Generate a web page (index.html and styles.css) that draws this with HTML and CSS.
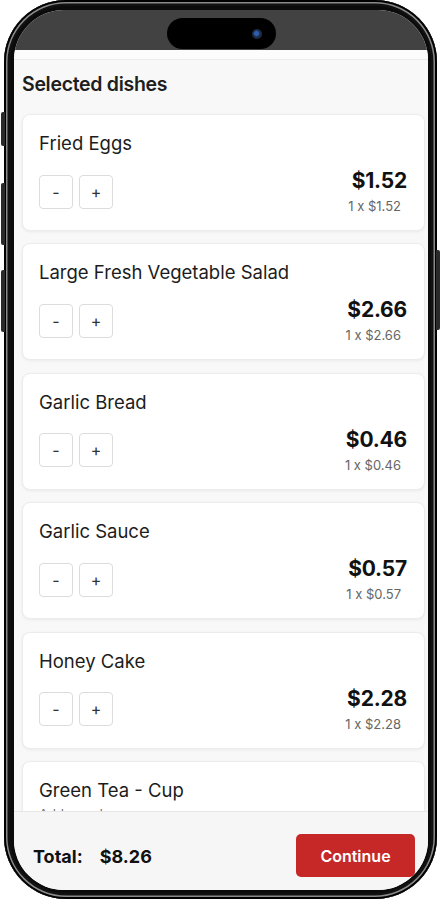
FILE: index.html
```html
<!DOCTYPE html>
<html lang="en">
<head>
<meta charset="utf-8">
<title>Selected dishes</title>
<link rel="stylesheet" href="styles.css">
</head>
<body>
<div class="phone">
  <span class="side-btn side-btn-1"></span>
  <span class="side-btn side-btn-2"></span>
  <span class="side-btn side-btn-3"></span>
  <span class="side-btn side-btn-r"></span>
  <div class="screen">
    <div class="status">
      <div class="island"><span class="cam"></span></div>
    </div>
    <div class="topbar"></div>
    <main class="content">
      <h1 class="title">Selected dishes</h1>
      <div class="list">
        <div class="card">
          <div class="name">Fried Eggs</div>
          <div class="row">
            <div class="qty"><button class="qbtn">-</button><button class="qbtn">+</button></div>
            <div class="price-box"><div class="price">$1.52</div><div class="unit">1 x $1.52</div></div>
          </div>
        </div>
        <div class="card">
          <div class="name">Large Fresh Vegetable Salad</div>
          <div class="row">
            <div class="qty"><button class="qbtn">-</button><button class="qbtn">+</button></div>
            <div class="price-box"><div class="price">$2.66</div><div class="unit">1 x $2.66</div></div>
          </div>
        </div>
        <div class="card">
          <div class="name">Garlic Bread</div>
          <div class="row">
            <div class="qty"><button class="qbtn">-</button><button class="qbtn">+</button></div>
            <div class="price-box"><div class="price">$0.46</div><div class="unit">1 x $0.46</div></div>
          </div>
        </div>
        <div class="card">
          <div class="name">Garlic Sauce</div>
          <div class="row">
            <div class="qty"><button class="qbtn">-</button><button class="qbtn">+</button></div>
            <div class="price-box"><div class="price">$0.57</div><div class="unit">1 x $0.57</div></div>
          </div>
        </div>
        <div class="card">
          <div class="name">Honey Cake</div>
          <div class="row">
            <div class="qty"><button class="qbtn">-</button><button class="qbtn">+</button></div>
            <div class="price-box"><div class="price">$2.28</div><div class="unit">1 x $2.28</div></div>
          </div>
        </div>
        <div class="card">
          <div class="name">Green Tea - Cup</div>
          <div class="addons">Add-ons: Lemon</div>
          <div class="row">
            <div class="qty"><button class="qbtn">-</button><button class="qbtn">+</button></div>
            <div class="price-box"><div class="price">$1.25</div><div class="unit">1 x $1.25</div></div>
          </div>
        </div>
      </div>
    </main>
    <footer class="footer">
      <div class="total"><span class="total-label">Total:</span><span class="total-value">$8.26</span></div>
      <button class="continue">Continue</button>
    </footer>
  </div>
</div>
</body>
</html>
```

FILE: styles.css
```css
* { box-sizing: border-box; }
html, body { margin: 0; padding: 0; background: #ffffff; }
body {
  font-family: Inter, "Liberation Sans", Arial, sans-serif;
  color: #1c1c1c;
  width: 440px;
  height: 900px;
  overflow: hidden;
}
.phone {
  position: relative;
  margin-left: 4px;
  width: 433px;
  height: 899px;
  border-radius: 62px;
  background: #0b0b0b;
  padding: 10px 9px 9px 10px;
  box-shadow: inset 0 0 0 2px #000, inset 0 0 0 3.5px #8a8a8a, inset 0 0 0 6px #111;
}
.side-btn {
  position: absolute;
  left: -3px;
  width: 4px;
  background: #2a2a2a;
  border-radius: 2px 0 0 2px;
}
.side-btn-1 { top: 112px; height: 34px; }
.side-btn-2 { top: 183px; height: 62px; }
.side-btn-3 { top: 270px; height: 62px; }
.side-btn-r { left: auto; right: -3px; top: 250px; height: 80px; border-radius: 0 2px 2px 0; }
.screen {
  width: 100%;
  height: 100%;
  border-radius: 50px;
  overflow: hidden;
  background: #f8f8f8;
  display: flex;
  flex-direction: column;
}
.status {
  flex: 0 0 40px;
  background: #424242;
  display: flex;
  justify-content: center;
  align-items: flex-end;
  padding-bottom: 1px;
}
.island {
  width: 109px;
  height: 31px;
  background: #000;
  border-radius: 16px;
  display: flex;
  align-items: center;
  justify-content: flex-end;
  padding-right: 14px;
}
.cam {
  width: 10px;
  height: 10px;
  border-radius: 50%;
  background: radial-gradient(circle at 45% 45%, #2d5fb0 0 25%, #1a2a45 45%, #2b2f36 100%);
}
.topbar {
  flex: 0 0 10px;
  background: #fcfcfc;
  border-bottom: 1px solid #ebebeb;
}
.content {
  flex: 1 1 auto;
  overflow: hidden;
  padding: 12px 3px 0 8px;
}
.title {
  margin: 0 0 18px 0;
  font-size: 19.5px;
  line-height: 24px;
  font-weight: 600;
  color: #1e1e1e;
  letter-spacing: -0.3px;
}
.list {
  display: flex;
  flex-direction: column;
  gap: 12.4px;
}
.card {
  background: #fff;
  border: 1px solid #ececec;
  border-radius: 8px;
  box-shadow: 0 1px 3px rgba(0,0,0,0.06);
  padding: 17px 17px 15px 16px;
}
.name {
  font-size: 18.5px;
  line-height: 22px;
  color: #1c1c1c;
  margin-bottom: 14px;
}
.addons {
  font-size: 13px;
  line-height: 16px;
  color: #777;
  margin-top: -9px;
  margin-bottom: 8px;
}
.row {
  display: flex;
  justify-content: space-between;
  align-items: center;
}
.qty { display: flex; gap: 6px; }
.qbtn {
  width: 34px;
  height: 34px;
  border: 1px solid #dcdcdc;
  border-radius: 4px;
  background: #fff;
  font-family: inherit;
  font-size: 16px;
  color: #333;
  padding: 0;
}
.price-box { text-align: right; }
.price {
  font-size: 21px;
  line-height: 26px;
  font-weight: 700;
  color: #111;
  letter-spacing: -0.2px;
}
.unit {
  font-size: 13px;
  line-height: 18px;
  color: #666;
  margin-top: 3px;
  margin-right: 6px;
}
.footer {
  flex: 0 0 79px;
  background: #f6f6f6;
  border-top: 1px solid #e6e6e6;
  display: flex;
  justify-content: space-between;
  align-items: center;
  padding: 9px 13px 0 19px;
}
.total {
  font-size: 18px;
  line-height: 22px;
  font-weight: 700;
  color: #111;
  display: flex;
  gap: 17px;
  margin-top: 3px;
}
.continue {
  width: 119px;
  height: 43px;
  border: none;
  border-radius: 5px;
  background: #c62828;
  color: #fff;
  font-family: inherit;
  font-size: 16px;
  font-weight: 600;
}
```
